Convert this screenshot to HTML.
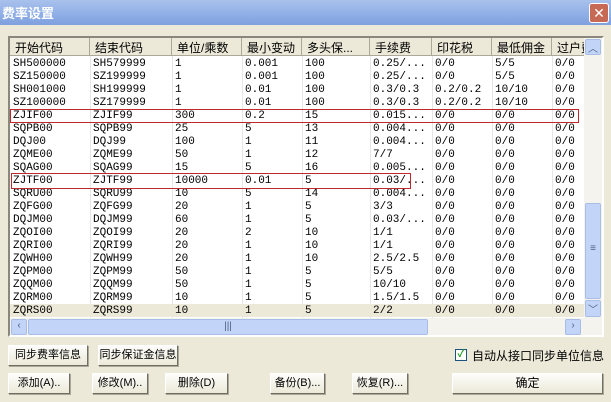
<!DOCTYPE html><html><head><meta charset="utf-8"><style>
*{margin:0;padding:0;box-sizing:border-box}
body{width:611px;height:402px;overflow:hidden;background:#ece9d8;font-family:"Liberation Sans","Noto Sans CJK SC",sans-serif;font-size:12px;position:relative}
.title{position:absolute;left:0;top:0;width:611px;height:25px;background:linear-gradient(#a9c1ec,#8eaee6 60%,#7f9fde);color:#fff;font-weight:bold;font-size:13px;padding:3px 0 0 2px}
.x{position:absolute;right:2px;top:3px;width:20px;height:20px;background:#c76a55;border:1px solid #fff;border-radius:3px;color:#fff;font-size:14px;text-align:center;line-height:18px}
.list{position:absolute;left:8px;top:36px;width:596px;height:301px;background:#fff;border:2px solid;border-color:#8a877c #fff #fff #8a877c;overflow:hidden}
.hdr{position:absolute;top:0;height:18px;background:#ece9d8;border-right:1px solid #aca899;border-bottom:1px solid #aca899;padding:1px 0 0 5px;font-size:12px;white-space:nowrap;overflow:hidden}
.row{position:absolute;left:0;width:574px;height:13px;font-family:"Liberation Mono","Noto Sans CJK SC",monospace;font-size:11px;line-height:13px}
.row span{position:absolute;top:1px;padding-left:3px;white-space:nowrap}
.vl{position:absolute;top:18px;height:264px;width:1px;background:#e6e6e6}
.red{position:absolute;border:1px solid #c0282b}
.vs{position:absolute;left:574px;top:0;width:18px;height:280px;background:#f4f3ee}
.sb{position:absolute;background:#c2d4f8;border:1px solid #a8bde6;border-radius:2px;color:#4d6185;text-align:center;font-size:10px}
.hs{position:absolute;left:0;top:280px;width:592px;height:17px;background:#f4f3ee}
.btn{position:absolute;height:21px;background:linear-gradient(#fdfdfb,#ece9d8);border:1px solid;border-color:#fff #716f64 #716f64 #fff;box-shadow:1px 1px 0 #aca899;text-align:center;font-size:11px;line-height:19px;white-space:nowrap;overflow:hidden}
</style></head><body>
<div class="title">费率设置</div><div class="x">✕</div>
<div class="list">
<div class="hdr" style="left:0;width:80px">开始代码</div>
<div class="hdr" style="left:80px;width:82px">结束代码</div>
<div class="hdr" style="left:162px;width:70px">单位/乘数</div>
<div class="hdr" style="left:232px;width:60px">最小变动</div>
<div class="hdr" style="left:292px;width:68px">多头保...</div>
<div class="hdr" style="left:360px;width:62px">手续费</div>
<div class="hdr" style="left:422px;width:60px">印花税</div>
<div class="hdr" style="left:482px;width:60px">最低佣金</div>
<div class="hdr" style="left:542px;width:40px">过户费</div>
<div class="vl" style="left:80px"></div><div class="vl" style="left:162px"></div><div class="vl" style="left:232px"></div><div class="vl" style="left:292px"></div><div class="vl" style="left:360px"></div><div class="vl" style="left:422px"></div><div class="vl" style="left:482px"></div><div class="vl" style="left:542px"></div>
<div id="rows"></div>
<div class="red" style="left:0;top:71px;width:569px;height:14px"></div>
<div class="red" style="left:1px;top:135px;width:400px;height:16px"></div>
<div class="vs"><div class="sb" style="left:1px;top:1px;width:16px;height:16px">︿</div><div class="sb" style="left:1px;top:165px;width:16px;height:96px;line-height:90px">≡</div><div class="sb" style="left:1px;top:262px;width:16px;height:17px">﹀</div></div>
<div class="hs"><div class="sb" style="left:1px;top:1px;width:16px;height:16px">‹</div><div class="sb" style="left:18px;top:1px;width:400px;height:16px;line-height:14px">|||</div><div class="sb" style="left:555px;top:1px;width:16px;height:16px">›</div></div>
</div>
<div class="btn" style="left:8px;top:345px;width:80px">同步费率信息</div>
<div class="btn" style="left:98px;top:345px;width:80px">同步保证金信息</div>
<div style="position:absolute;left:455px;top:349px;width:12px;height:12px;border:1px solid #1c5180;background:#fff;font-size:10px;line-height:10px;text-align:center;color:#21a121;font-weight:bold">✓</div>
<div style="position:absolute;left:472px;top:347px;font-size:12px">自动从接口同步单位信息</div>
<div class="btn" style="left:8px;top:373px;width:62px">添加(A)..</div>
<div class="btn" style="left:92px;top:373px;width:56px">修改(M)..</div>
<div class="btn" style="left:165px;top:373px;width:63px">删除(D)</div>
<div class="btn" style="left:270px;top:373px;width:55px">备份(B)...</div>
<div class="btn" style="left:352px;top:373px;width:56px">恢复(R)...</div>
<div class="btn" style="left:452px;top:373px;width:151px;font-size:12px">确定</div>
<script>
var d=[["SH500000","SH579999","1","0.001","100","0.25/...","0/0","5/5"],["SZ150000","SZ199999","1","0.001","100","0.25/...","0/0","5/5"],["SH001000","SH199999","1","0.01","100","0.3/0.3","0.2/0.2","10/10"],["SZ100000","SZ179999","1","0.01","100","0.3/0.3","0.2/0.2","10/10"],["ZJIF00","ZJIF99","300","0.2","15","0.015...","0/0","0/0"],["SQPB00","SQPB99","25","5","13","0.004...","0/0","0/0"],["DQJ00","DQJ99","100","1","11","0.004...","0/0","0/0"],["ZQME00","ZQME99","50","1","12","7/7","0/0","0/0"],["SQAG00","SQAG99","15","5","16","0.005...","0/0","0/0"],["ZJTF00","ZJTF99","10000","0.01","5","0.03/...","0/0","0/0"],["SQRU00","SQRU99","10","5","14","0.004...","0/0","0/0"],["ZQFG00","ZQFG99","20","1","5","3/3","0/0","0/0"],["DQJM00","DQJM99","60","1","5","0.03/...","0/0","0/0"],["ZQOI00","ZQOI99","20","2","10","1/1","0/0","0/0"],["ZQRI00","ZQRI99","20","1","10","1/1","0/0","0/0"],["ZQWH00","ZQWH99","20","1","10","2.5/2.5","0/0","0/0"],["ZQPM00","ZQPM99","50","1","5","5/5","0/0","0/0"],["ZQQM00","ZQQM99","50","1","5","10/10","0/0","0/0"],["ZQRM00","ZQRM99","10","1","5","1.5/1.5","0/0","0/0"],["ZQRS00","ZQRS99","10","1","5","2/2","0/0","0/0"]];
var L=[0,80,162,232,292,360,422,482,542],h="";
d.forEach(function(r,i){r.push("0/0");h+='<div class="row" style="top:'+(19+i*13)+'px;'+(i==19?'background:#ece9d8':'')+'">';r.forEach(function(c,j){h+='<span style="left:'+L[j]+'px">'+c+'</span>'});h+='</div>'});
document.getElementById('rows').innerHTML=h;
</script>
</body></html>
